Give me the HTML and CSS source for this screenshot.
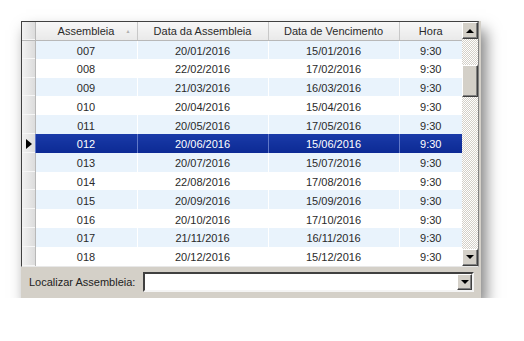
FILE: index.html
```html
<!DOCTYPE html>
<html lang="pt">
<head>
  <meta charset="UTF-8">
  <title>Assembleias</title>
  <link rel="stylesheet" href="styles.css">
</head>
<body>

<div class="window">
  <div class="grid">
    <table class="data">
      <colgroup>
        <col class="c-ind">
        <col class="c-num">
        <col class="c-date">
        <col class="c-date">
        <col class="c-hora">
      </colgroup>
      <thead>
        <tr>
          <th class="ind"></th>
          <th>Assembleia <span class="sort">&#9650;</span></th>
          <th>Data da Assembleia</th>
          <th>Data de Vencimento</th>
          <th>Hora</th>
        </tr>
      </thead>
      <tbody>
        <tr><td class="ind"></td><td>007</td><td>20/01/2016</td><td>15/01/2016</td><td>9:30</td></tr>
        <tr><td class="ind"></td><td>008</td><td>22/02/2016</td><td>17/02/2016</td><td>9:30</td></tr>
        <tr><td class="ind"></td><td>009</td><td>21/03/2016</td><td>16/03/2016</td><td>9:30</td></tr>
        <tr><td class="ind"></td><td>010</td><td>20/04/2016</td><td>15/04/2016</td><td>9:30</td></tr>
        <tr><td class="ind"></td><td>011</td><td>20/05/2016</td><td>17/05/2016</td><td>9:30</td></tr>
        <tr class="selected"><td class="ind"><span class="pointer"></span></td><td>012</td><td>20/06/2016</td><td>15/06/2016</td><td>9:30</td></tr>
        <tr><td class="ind"></td><td>013</td><td>20/07/2016</td><td>15/07/2016</td><td>9:30</td></tr>
        <tr><td class="ind"></td><td>014</td><td>22/08/2016</td><td>17/08/2016</td><td>9:30</td></tr>
        <tr><td class="ind"></td><td>015</td><td>20/09/2016</td><td>15/09/2016</td><td>9:30</td></tr>
        <tr><td class="ind"></td><td>016</td><td>20/10/2016</td><td>17/10/2016</td><td>9:30</td></tr>
        <tr><td class="ind"></td><td>017</td><td>21/11/2016</td><td>16/11/2016</td><td>9:30</td></tr>
        <tr><td class="ind"></td><td>018</td><td>20/12/2016</td><td>15/12/2016</td><td>9:30</td></tr>
      </tbody>
    </table>

    <div class="scrollbar">
      <div class="sb-btn"><span class="arrow up"></span></div>
      <div class="sb-track">
        <div class="sb-thumb"></div>
      </div>
      <div class="sb-btn"><span class="arrow down"></span></div>
    </div>
  </div>

  <div class="search">
    <label>Localizar Assembleia:</label>
    <div class="combo">
      <div class="combo-btn"><span class="arrow down"></span></div>
    </div>
  </div>
</div>

</body>
</html>
```

FILE: styles.css
```css
body {
  margin: 0;
  background: #fff;
  font-family: "Liberation Sans", Arial, sans-serif;
  font-size: 11px;
  color: #2a2a2a;
}
.window {
  margin: 21px 0 0 21px;
  width: 460px;
  background: #d4d0c8;
  box-shadow: 5px 9px 14px rgba(0,0,0,0.5);
}
.grid {
  display: flex;
  width: 456px;
  border-top: 1px solid #404040;
  border-left: 1px solid #404040;
  border-right: 1px solid #808080;
  border-bottom: 1px solid #e8e8e8;
  background: #fff;
}
.data {
  border-collapse: collapse;
  table-layout: fixed;
  width: 440px;
}
.c-ind { width: 13px; }
.c-num { width: 102px; }
.c-date { width: 131px; }
.c-hora { width: 63px; }
th {
  height: 18px;
  box-sizing: border-box;
  padding: 0;
  font-weight: normal;
  background: linear-gradient(#f7f7f7, #e9e9e9);
  border-right: 1px solid #c8c8c8;
  border-bottom: 1px solid #b8b8b8;
  position: relative;
}
th:last-child { border-right: none; }
.sort {
  position: absolute;
  right: 6px;
  top: 6px;
  font-size: 5px;
  color: #b0b0b0;
}
td {
  height: 18.8px;
  box-sizing: border-box;
  padding: 2px 0 0;
  text-align: center;
  border-right: 1px solid #fff;
}
td:last-child { border-right: none; }
tbody tr:nth-child(odd) td { background: #e9f3fc; }
.ind {
  background: linear-gradient(90deg, #f2f2f2, #dcdcdc) !important;
  border-right: 1px solid #b8b8b8;
  box-shadow: inset 0 -1px 0 #f6f6f6;
}
tr.selected td {
  background: linear-gradient(#1a3aa8, #0c2a94);
  color: #fff;
  border-right: 1px solid #6078c8;
}
tr.selected td:last-child { border-right: none; }
.pointer {
  display: block;
  width: 0;
  height: 0;
  margin-left: 4px;
  border-top: 5px solid transparent;
  border-bottom: 5px solid transparent;
  border-left: 6px solid #000;
}
.scrollbar {
  width: 16px;
  display: flex;
  flex-direction: column;
}
.sb-btn {
  height: 17px;
  box-sizing: border-box;
  background: #d4d0c8;
  border: 1px solid;
  border-color: #fff #404040 #404040 #fff;
  box-shadow: inset -1px -1px 0 #808080;
  display: flex;
  align-items: center;
  justify-content: center;
}
.sb-track {
  flex: 1;
  background: repeating-conic-gradient(#fff 0 25%, #d4d0c8 0 50%) 0 0 / 2px 2px;
  padding-top: 26px;
}
.sb-thumb {
  height: 32px;
  box-sizing: border-box;
  background: #d4d0c8;
  border: 1px solid;
  border-color: #fff #404040 #404040 #fff;
  box-shadow: inset -1px -1px 0 #808080;
}
.arrow {
  width: 0;
  height: 0;
  border-left: 4px solid transparent;
  border-right: 4px solid transparent;
}
.arrow.up { border-bottom: 4px solid #000; }
.arrow.down { border-top: 4px solid #000; }
.search {
  display: flex;
  align-items: center;
  height: 31px;
  padding: 0 7px 0 8px;
}
.search label {
  width: 114px;
  color: #222;
}
.combo {
  flex: 1;
  height: 20px;
  box-sizing: border-box;
  background: #fff;
  border: 2px solid;
  border-color: #404040 #f4f4f4 #f4f4f4 #404040;
  display: flex;
  justify-content: flex-end;
  align-items: center;
}
.combo-btn {
  width: 15px;
  height: 16px;
  box-sizing: border-box;
  background: #d4d0c8;
  border: 1px solid;
  border-color: #fff #404040 #404040 #fff;
  box-shadow: inset -1px -1px 0 #808080;
  display: flex;
  align-items: center;
  justify-content: center;
}
```
